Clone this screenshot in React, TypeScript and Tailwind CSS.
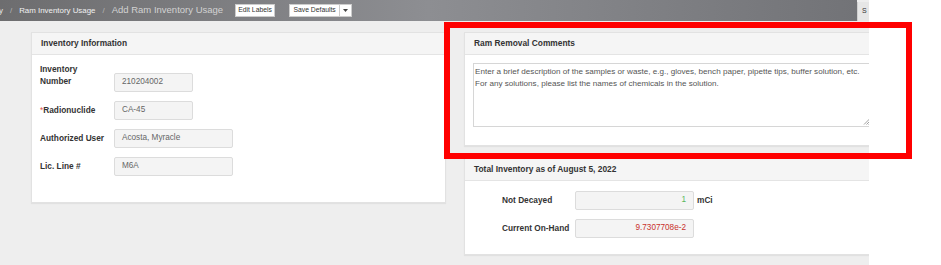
import React from "react";

const font = { fontFamily: '"Liberation Sans", Arial, sans-serif' };

const Field: React.FC<{ value: string; w: string; color?: string; right?: boolean }> = ({ value, w, color, right }) => (
  <div
    className={`h-[19px] ${w} bg-[#f4f4f4] border border-[#dcdcdc] rounded-[2px] flex items-center px-[7px] text-[8.2px] ${
      right ? "justify-end" : ""
    } ${color ?? "text-[#666]"}`}
  >
    {value}
  </div>
);

const PanelHead: React.FC<{ title: string; h?: string }> = ({ title, h = "h-[22px]" }) => (
  <div className={`${h} bg-[#f5f5f5] border-b border-[#e4e4e4] flex items-center px-[9px] text-[8.4px] font-bold text-[#333]`}>
    {title}
  </div>
);

export default function App() {
  return (
    <div className="relative flex w-[941px] h-[265px] bg-white overflow-hidden" style={font}>
      <div className="w-[869px] h-full bg-[#eeeeee] overflow-hidden flex flex-col">
        {/* top bar */}
        <div className="h-[21px] flex items-stretch shrink-0">
          <div className="flex-1 flex items-center bg-gradient-to-r from-[#6d6d6f] via-[#8d8e92] to-[#727377]">
            <span className="ml-[-1px] text-[7.9px] text-[#e8e8e8]">y</span>
            <span className="mx-[7px] text-[7.9px] text-[#b5b5b5]">/</span>
            <span className="text-[7.9px] text-[#f0f0f0]">Ram Inventory Usage</span>
            <span className="mx-[7px] text-[7.9px] text-[#b5b5b5]">/</span>
            <span className="text-[9.5px] text-[#d2d2d2]">Add Ram Inventory Usage</span>
            <div className="ml-[12px] h-[13px] w-[40px] bg-white border border-[#ccc] flex items-center justify-center text-[6.8px] text-[#333]">
              Edit Labels
            </div>
            <div className="ml-[14px] h-[13px] w-[63px] bg-white border border-[#ccc] flex items-stretch text-[6.8px] text-[#333]">
              <div className="flex-1 flex items-center justify-center">Save Defaults</div>
              <div className="w-[12px] border-l border-[#ccc] flex items-center justify-center">
                <svg width="5" height="3" viewBox="0 0 5 3">
                  <path d="M0 0h5L2.5 3z" fill="#444" />
                </svg>
              </div>
            </div>
          </div>
          <div className="w-[12px] mt-[2px] bg-[#e6e6e6] border-l border-[#cfcfcf] flex items-center pl-[4px] text-[7px] text-[#333]">
            S
          </div>
        </div>

        {/* content */}
        <div className="flex items-start gap-[18px] pl-[31px] pt-[11px]">
          {/* left column */}
          <div className="w-[415px] shrink-0 bg-white border border-[#e2e2e2] shadow-[0_1px_1px_rgba(0,0,0,0.05)]">
            <PanelHead title="Inventory Information" />
            <div className="pl-[8px] pt-[8px] pb-[26px] text-[8.3px] font-bold text-[#333]">
              <div className="flex items-start">
                <div className="w-[74px] leading-[12px]">
                  Inventory
                  <br />
                  Number
                </div>
                <div className="mt-[10px] font-normal">
                  <Field value="210204002" w="w-[79px]" />
                </div>
              </div>
              <div className="flex items-center mt-[9px]">
                <div className="w-[74px]">
                  <span className="text-[#d9534f] font-normal">*</span>Radionuclide
                </div>
                <div className="font-normal">
                  <Field value="CA-45" w="w-[79px]" />
                </div>
              </div>
              <div className="flex items-center mt-[9px]">
                <div className="w-[74px]">Authorized User</div>
                <div className="font-normal">
                  <Field value="Acosta, Myracle" w="w-[119px]" />
                </div>
              </div>
              <div className="flex items-center mt-[9px]">
                <div className="w-[74px]">Lic. Line #</div>
                <div className="font-normal">
                  <Field value="M6A" w="w-[119px]" />
                </div>
              </div>
            </div>
          </div>

          {/* right column */}
          <div className="w-[430px] shrink-0 flex flex-col gap-[11px]">
            <div className="bg-white border border-[#e2e2e2] shadow-[0_1px_1px_rgba(0,0,0,0.05)]">
              <PanelHead title="Ram Removal Comments" />
              <div className="pl-[8px] pt-[8px] pb-[18px]">
                <div className="relative h-[64px] w-[410px] border border-[#d6d6d6] bg-white pl-[1px] pt-[2px] text-[8.1px] leading-[12px] text-[#555] whitespace-nowrap">
                  Enter a brief description of the samples or waste, e.g., gloves, bench paper, pipette tips, buffer solution, etc.
                  <br />
                  For any solutions, please list the names of chemicals in the solution.
                  <svg className="absolute left-[389px] bottom-[1px]" width="7" height="7" viewBox="0 0 7 7">
                    <path d="M6.5 1L1 6.5M6.5 3.5L3.5 6.5M6.5 5.5L5.5 6.5" stroke="#888" strokeWidth="0.8" />
                  </svg>
                </div>
              </div>
            </div>

            <div className="bg-white border border-[#e2e2e2] shadow-[0_1px_1px_rgba(0,0,0,0.05)]">
              <PanelHead title="Total Inventory as of August 5, 2022" h="h-[23px]" />
              <div className="pl-[37px] pt-[10px] pb-[16px] text-[8.3px] font-bold text-[#333]">
                <div className="flex items-center">
                  <div className="w-[73px]">Not Decayed</div>
                  <div className="font-normal">
                    <Field value="1" w="w-[119px]" color="text-[#5cb85c]" right />
                  </div>
                  <span className="ml-[3px]">mCi</span>
                </div>
                <div className="flex items-center mt-[9px]">
                  <div className="w-[73px]">Current On-Hand</div>
                  <div className="font-normal">
                    <Field value="9.7307708e-2" w="w-[119px]" color="text-[#c9302c]" right />
                  </div>
                </div>
              </div>
            </div>
          </div>
        </div>
      </div>
      <div className="flex-1 bg-white" />

      {/* red annotation box */}
      <div className="absolute left-[444px] top-[22px] w-[468px] h-[137px] border-[6px] border-[#ff0000] pointer-events-none" />
    </div>
  );
}
